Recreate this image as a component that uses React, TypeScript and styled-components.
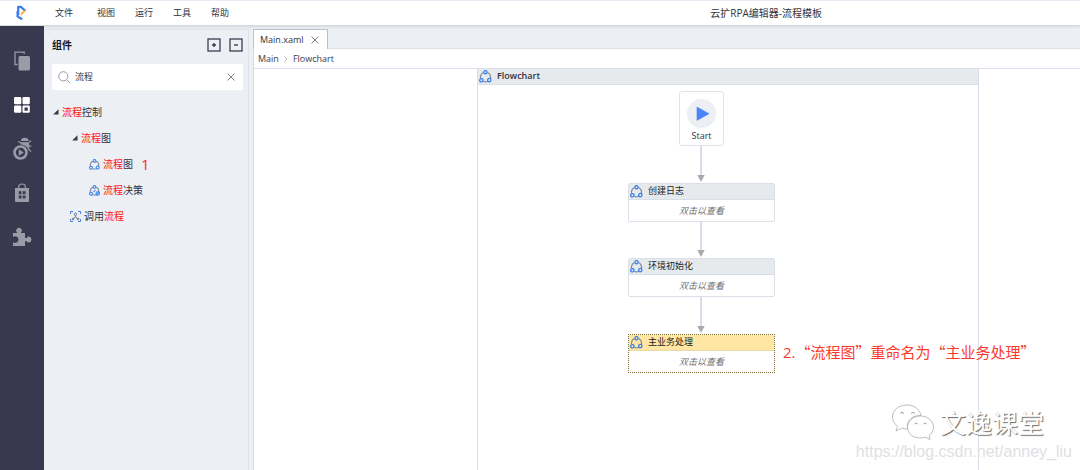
import React, { useState } from 'react';
import styled, { createGlobalStyle } from 'styled-components';

const GlobalStyle = createGlobalStyle`
  *, *::before, *::after { box-sizing: border-box; }
  body {
    margin: 0;
    background: #eceff4;
    color: #33333b;
    font-family: "Open Sans", "Noto Sans CJK SC", sans-serif;
    font-size: 9px;
    line-height: 14px;
  }
  button, input { font: inherit; color: inherit; }
  button { padding: 0; border: 0; background: none; cursor: pointer; }
  svg { display: block; flex: none; }
  ul { list-style: none; margin: 0; padding: 0; }
`;

const Shell = styled.div`
  display: flex;
  flex-direction: column;
  min-height: 100vh;
`;

const TopBar = styled.header`
  display: flex;
  align-items: center;
  height: 26px;
  padding-left: 14px;
  background: #fff;
  border-top: 1px solid #e6ebf6;
  border-bottom: 1px solid #d9dbe0;
  box-shadow: 0 1px 2px rgba(60, 64, 80, 0.12);
  z-index: 1;
`;

const Menu = styled.nav`
  display: grid;
  grid-template-columns: 42px repeat(4, 38px);
  margin-left: 27px;
`;

const MenuButton = styled.button`
  text-align: left;
`;

const DocTitle = styled.h1`
  margin: 0 258px 0 auto;
  font-size: 10px;
  font-weight: 400;
  white-space: nowrap;
`;

const Body = styled.div`
  display: flex;
  flex: 1;
`;

const Rail = styled.nav`
  display: flex;
  flex: none;
  flex-direction: column;
  align-items: center;
  gap: 20px;
  width: 44px;
  padding-top: 23px;
  background: #38394e;
`;

const RailButton = styled.button<{ $active?: boolean }>`
  display: grid;
  place-items: center;
  width: 24px;
  height: 24px;
  color: ${(p) => (p.$active ? '#ffffff' : '#9a9ba7')};
`;

const SidePanel = styled.aside`
  flex: none;
  width: 205px;
  margin-top: 3px;
  padding: 0 5px 0 8px;
  border-top: 1px solid #dfe2e8;
  border-right: 1px solid #dfe2e8;
`;

const PanelHead = styled.div`
  display: flex;
  align-items: center;
  height: 30px;
`;

const PanelTitle = styled.h2`
  flex: 1;
  margin: 0;
  font-size: 10px;
  font-weight: 700;
  color: #16161c;
`;

const SquareButton = styled.button`
  width: 14px;
  height: 14px;
  margin-left: 8px;
`;

const SearchBox = styled.label`
  display: flex;
  align-items: center;
  height: 26px;
  margin-top: 4px;
  padding: 0 8px 0 6px;
  background: #fff;
`;

const SearchInput = styled.input`
  flex: 1;
  min-width: 0;
  margin-left: 4px;
  padding: 0;
  border: 0;
  outline: none;
  background: transparent;
`;

const Tree = styled.ul`
  padding-top: 9px;
  font-size: 10px;
`;

const TreeRow = styled.li<{ $indent: number }>`
  display: flex;
  align-items: center;
  height: 26px;
  padding-left: ${(p) => p.$indent}px;
  white-space: nowrap;
`;

const TreeLabel = styled.span`
  margin-left: 3px;
`;

const Hit = styled.em`
  font-style: normal;
  color: #ff1414;
`;

const StepNumber = styled.span`
  margin-left: 8px;
  font-size: 15px;
  color: #ff2a1c;
`;

const Editor = styled.main`
  display: flex;
  flex: 1;
  flex-direction: column;
  min-width: 0;
  margin: 3px 0 0 4px;
`;

const TabStrip = styled.div`
  display: flex;
  height: 20px;
  border-bottom: 1px solid #dcdfe5;
`;

const Tab = styled.div`
  display: flex;
  align-items: center;
  justify-content: space-between;
  width: 75px;
  height: 20px;
  padding: 0 8px 0 6px;
  background: #fff;
  border: 1px solid #bfc0c4;
  border-bottom: 0;
`;

const Crumbs = styled.nav`
  display: flex;
  align-items: center;
  gap: 5px;
  height: 20px;
  padding-left: 4px;
  background: #fff;
  border-left: 1px solid #d5dae4;
  border-bottom: 1px solid #dbe1ec;
`;

const Crumb = styled.a`
  color: #3b3b49;
  text-decoration: none;
`;

const Canvas = styled.div`
  display: flex;
  position: relative;
  flex: 1;
  min-height: 380px;
  padding-left: 223px;
  background: #fff;
  border-left: 1px solid #d5dae4;
`;

const Frame = styled.section`
  display: flex;
  flex: none;
  flex-direction: column;
  width: 502px;
  border: 1px solid #d9e0ea;
  border-width: 0 1px;
`;

const CardHead = styled.header<{ $selected?: boolean }>`
  display: flex;
  align-items: center;
  gap: 5px;
  height: 16px;
  padding-left: 1px;
  background: ${(p) => (p.$selected ? '#ffe6a2' : '#e7eaed')};
  border-bottom: 1px solid ${(p) => (p.$selected ? '#e8d9a8' : '#d7dfe9')};
  color: #1c1c22;
`;

const CardTitle = styled.h3`
  margin: 0;
  padding-bottom: 1px;
  font-size: 9px;
  font-weight: 400;
  line-height: 14px;
`;

const FrameTitle = styled(CardTitle)`
  font-weight: 600;
  color: #33333f;
`;

const Surface = styled.div`
  position: relative;
  flex: 1;
`;

const Node = styled.article<{ $top: number; $selected?: boolean }>`
  position: absolute;
  left: 150px;
  top: ${(p) => p.$top}px;
  width: 147px;
  height: 39px;
  background: #fff;
  border: 1px ${(p) => (p.$selected ? 'dotted #7d6a35' : 'solid #dadfe9')};
  border-radius: ${(p) => (p.$selected ? 0 : 2)}px;
`;

const NodeHint = styled.p`
  margin: 0;
  font-style: italic;
  line-height: 21px;
  text-align: center;
  color: #6f6f74;
`;

const StartNode = styled.article`
  display: flex;
  position: absolute;
  left: 201px;
  top: 6px;
  flex-direction: column;
  align-items: center;
  gap: 1px;
  width: 45px;
  height: 55px;
  padding-top: 7px;
  background: #fff;
  border: 1px solid #e0e2ec;
  border-radius: 3px;
`;

const Links = styled.svg`
  position: absolute;
  left: 0;
  top: 0;
`;

const Note = styled.p`
  position: absolute;
  left: 529px;
  top: 272px;
  margin: 0;
  font-size: 15px;
  line-height: 22px;
  white-space: nowrap;
  color: #fb3a2c;
`;

const Cjk = styled.span`
  font-family: "Noto Sans CJK SC", sans-serif;
`;

const Signature = styled.div`
  position: absolute;
  right: 8px;
  bottom: 8px;
  display: flex;
  flex-direction: column;
  align-items: flex-end;
`;

const SignatureName = styled.div`
  display: flex;
  align-items: center;
  gap: 5px;
  margin-right: 28px;
  font-family: "Noto Sans CJK SC", sans-serif;
  font-size: 26px;
  line-height: 40px;
  color: #fff;
  text-shadow: 1px 1px 1px #6a6a6a;
`;

const SignatureUrl = styled.div`
  font-family: "Liberation Sans", sans-serif;
  font-size: 16px;
  line-height: 20px;
  color: #e0e0e2;
`;

const FlowIcon = ({ size = 13, decision = false }: { size?: number; decision?: boolean }) => (
  <svg width={size} height={size} viewBox="0 0 12 12" fill="none" strokeWidth="1.100">
    <path d="M4.200 2.300C2.200 3.200 1.200 5.200 1.300 7.600M7.800 2.300c2 .9 3 2.900 2.900 5.300M4 10.600q2 .7 4 0" stroke="#7d8797" />
    <circle cx="6" cy="2.100" r="1.500" stroke="#2f7be8" />
    <circle cx="2.200" cy="9.500" r="1.600" stroke="#2f7be8" />
    <circle cx="9.500" cy="9.300" r={decision ? 1.900 : 1.600} stroke="#2f7be8" />
    {decision && <path d="M8 10.800l3-3M5 7.500l2-2" stroke="#2f7be8" />}
  </svg>
);

const InvokeIcon = () => (
  <svg width="11" height="11" viewBox="0 0 11 11" fill="none">
    <path d="M.5 3V.5H3M8 .5h2.500V3M10.500 8v2.500H8M3 10.500H.5V8" stroke="#3f83e6" />
    <path d="M5.500 4.500v1.500M3.500 7.500L5.500 6l2 1.500" stroke="#6d7788" />
    <circle cx="5.500" cy="3.300" r="1.200" stroke="#6d7788" />
    <circle cx="3" cy="8" r=".9" stroke="#6d7788" />
    <circle cx="8" cy="8" r=".9" stroke="#6d7788" />
  </svg>
);

const Caret = () => (
  <svg width="6" height="6" viewBox="0 0 6 6">
    <path d="M5.500 .3v5.200H.2z" fill="#3a3a42" />
  </svg>
);

const CloseIcon = () => (
  <svg width="8" height="8" viewBox="0 0 8 8" stroke="#7d7f8a" fill="none">
    <path d="M.5 .5l7 7M7.500 .5l-7 7" />
  </svg>
);

const SignIcon = ({ plus }: { plus?: boolean }) => (
  <svg width="14" height="14" viewBox="0 0 14 14" stroke="#3b3d50" fill="none">
    <rect x="1" y="1" width="12" height="12" strokeWidth="1.300" />
    <path d={plus ? 'M5 7h4M7 5v4' : 'M5 7h4'} strokeWidth="1.400" />
  </svg>
);

const Logo = () => (
  <svg width="14" height="16" viewBox="0 0 14 16" fill="none">
    <path d="M4.200 10.200V1.900h2.600l4.600 4" stroke="#3f7df6" strokeWidth="2.300" strokeLinejoin="round" />
    <path d="M3.600 6v5.600l4.600 2.700" stroke="#3f7df6" strokeWidth="2.300" strokeLinejoin="round" />
    <path d="M12.300 5.500L6.800 10.900V7.700l3.200-2.500z" fill="#fbb22c" />
  </svg>
);

const railItems = [
  {
    label: '文件',
    icon: (
      <svg width="18" height="20" viewBox="0 0 18 20">
        <path d="M4.500 13.500H2V1.200h9.200V3" fill="none" stroke="currentColor" strokeWidth="1.300" />
        <rect x="5.500" y="5" width="11.500" height="14.500" rx="1.500" fill="currentColor" />
      </svg>
    ),
  },
  {
    label: '组件',
    icon: (
      <svg width="16" height="16" viewBox="0 0 16 16" fill="currentColor">
        <rect x="0" y="0" width="7.300" height="7.300" rx="1.300" />
        <rect x="8.500" y="0" width="7.300" height="7.300" rx="1.300" />
        <rect x="0" y="8.500" width="7.300" height="7.300" rx="1.300" />
        <path fillRule="evenodd" d="M9.500 8.500h5.300q1 0 1 1v5.300q0 1-1 1H9.500q-1 0-1-1V9.500q0-1 1-1zm1 2v3.300h3.300v-3.300z" />
      </svg>
    ),
  },
  {
    label: '调试',
    icon: (
      <svg width="20" height="24" viewBox="0 0 20 24" fill="none" stroke="currentColor">
        <circle cx="8.500" cy="15.500" r="6" strokeWidth="2.600" />
        <path d="M6.800 12.300l5 3.200-5 3.200z" fill="currentColor" stroke="none" />
        <path d="M9 4a3.800 3.200 0 0 1 7.600 0z" fill="currentColor" stroke="none" />
        <path d="M8.500 5.300h7.500q2.300 3 1 7.200Q14 8 8.500 7.200z" fill="currentColor" stroke="none" />
        <path d="M15.500 6.500L19 3.800M16.500 9h3M16 11.500l3 3.200M6 4.500l3.500 1.500" strokeWidth="1.200" />
      </svg>
    ),
  },
  {
    label: '市场',
    icon: (
      <svg width="16" height="20" viewBox="0 0 16 20">
        <path d="M4.700 5V3.500q0-2.500 3.300-2.500t3.300 2.500V5" fill="none" stroke="currentColor" strokeWidth="1.200" />
        <path
          fill="currentColor"
          fillRule="evenodd"
          d="M1 5h14v13q0 1-1 1H2q-1 0-1-1zm3.700 3.300v3h2.800v-3zm4 0v3h2.800v-3zm-4 4.200v3h2.800v-3zm4 0v3h2.800v-3z"
        />
      </svg>
    ),
  },
  {
    label: '插件',
    icon: (
      <svg width="20" height="20" viewBox="0 0 20 20" fill="currentColor">
        <path d="M1 6h4.300Q4 4.800 4.100 3.300 4.600.8 7 .8t2.900 2.500Q10 4.800 8.700 6H13v5h1.600q.7-1.400 2.300-1.400 2.600.4 2.600 3t-2.600 3q-1.600 0-2.300-1.400H13V19H1v-3.800q.8.800 2.300.8 3-.4 3.200-3.400-.2-3-3.200-3.400-1.500 0-2.300.8z" />
      </svg>
    ),
  },
];

const menuItems = ['文件', '视图', '运行', '工具', '帮助'];

const nodes = [
  { title: '创建日志', top: 98 },
  { title: '环境初始化', top: 173 },
  { title: '主业务处理', top: 249, selected: true },
];

const links = [
  { from: 61, to: 98 },
  { from: 137, to: 173 },
  { from: 212, to: 249 },
];

const WechatMark = () => (
  <svg width="44" height="38" viewBox="0 0 44 38" fill="#fff" stroke="#a2a2a2" strokeWidth=".7">
    <path d="M16 2C7.500 2 1.500 7.300 1.500 14c0 4 2 7 5 9.200L5 28l5.500-2.800q3 .9 6 .7C15 17 22 12 30 12.500 28.500 6 23 2 16 2z" />
    <path d="M29.500 13C22 13 16.500 18 16.500 24.300S22 35 29.500 35q2.500 0 5-.8L39 36.500 38 32.500c2.700-2 4.500-4.900 4.500-8.200C42.500 18 37 13 29.500 13z" />
    <path d="M9 10.500q2-2.500 4 0M20 10.500q2-2.500 4 0M23.500 21q1.500-2 3.200 0M32.500 21q1.500-2 3.200 0" fill="none" stroke="#777" />
  </svg>
);

export default function App() {
  const [query, setQuery] = useState('流程');

  return (
    <Shell>
      <GlobalStyle />
      <TopBar>
        <Logo />
        <Menu>
          {menuItems.map((item) => (
            <MenuButton key={item}>{item}</MenuButton>
          ))}
        </Menu>
        <DocTitle>云扩RPA编辑器-流程模板</DocTitle>
      </TopBar>
      <Body>
        <Rail>
          {railItems.map((item, i) => (
            <RailButton key={item.label} $active={i === 1} aria-label={item.label}>
              {item.icon}
            </RailButton>
          ))}
        </Rail>
        <SidePanel>
          <PanelHead>
            <PanelTitle>组件</PanelTitle>
            <SquareButton aria-label="全部展开"><SignIcon plus /></SquareButton>
            <SquareButton aria-label="全部折叠"><SignIcon /></SquareButton>
          </PanelHead>
          <SearchBox>
            <svg width="13" height="13" viewBox="0 0 13 13" fill="none" stroke="#9a9ca6">
              <circle cx="5.300" cy="5.300" r="4.600" />
              <path d="M8.700 8.700l3.600 3.600" />
            </svg>
            <SearchInput aria-label="搜索组件" value={query} onChange={(e) => setQuery(e.target.value)} />
            <button aria-label="清除" onClick={() => setQuery('')}><CloseIcon /></button>
          </SearchBox>
          <Tree>
            <TreeRow $indent={1}>
              <Caret />
              <TreeLabel><Hit>流程</Hit>控制</TreeLabel>
            </TreeRow>
            <TreeRow $indent={20}>
              <Caret />
              <TreeLabel><Hit>流程</Hit>图</TreeLabel>
            </TreeRow>
            <TreeRow $indent={37}>
              <FlowIcon size={11} />
              <TreeLabel><Hit>流程</Hit>图</TreeLabel>
              <StepNumber>1</StepNumber>
            </TreeRow>
            <TreeRow $indent={37}>
              <FlowIcon size={11} decision />
              <TreeLabel><Hit>流程</Hit>决策</TreeLabel>
            </TreeRow>
            <TreeRow $indent={18}>
              <InvokeIcon />
              <TreeLabel>调用<Hit>流程</Hit></TreeLabel>
            </TreeRow>
          </Tree>
        </SidePanel>
        <Editor>
          <TabStrip>
            <Tab>
              <span>Main.xaml</span>
              <button aria-label="关闭"><CloseIcon /></button>
            </Tab>
          </TabStrip>
          <Crumbs>
            <Crumb href="#main">Main</Crumb>
            <svg width="4" height="6" viewBox="0 0 4 6" fill="none" stroke="#b4b8c6">
              <path d="M.5 .5L3 3 .5 5.500" />
            </svg>
            <Crumb href="#flowchart">Flowchart</Crumb>
          </Crumbs>
          <Canvas>
            <Frame>
              <CardHead>
                <FlowIcon />
                <FrameTitle>Flowchart</FrameTitle>
              </CardHead>
              <Surface>
                <Links width="500" height="290">
                  {links.map(({ from, to }) => (
                    <g key={from}>
                      <path d={`M223 ${from}V${to - 7}`} stroke="#cbd1df" strokeWidth="1.500" />
                      <path d={`M219.300 ${to - 8}h7.400L223 ${to - 1}z`} fill="#a9aaae" />
                    </g>
                  ))}
                </Links>
                <StartNode>
                  <svg width="29" height="29" viewBox="0 0 29 29">
                    <circle cx="14.500" cy="14.500" r="14.500" fill="#eceff4" />
                    <path d="M10 8l12 6.700L10 21.400z" fill="#4b84f8" stroke="#4b84f8" strokeLinejoin="round" strokeWidth=".6" />
                  </svg>
                  <span>Start</span>
                </StartNode>
                {nodes.map((node) => (
                  <Node key={node.title} $top={node.top} $selected={node.selected}>
                    <CardHead $selected={node.selected}>
                      <FlowIcon />
                      <CardTitle>{node.title}</CardTitle>
                    </CardHead>
                    <NodeHint>双击以查看</NodeHint>
                  </Node>
                ))}
              </Surface>
            </Frame>
            <Note>2.<Cjk>“流程图”重命名为“主业务处理”</Cjk></Note>
            <Signature>
              <SignatureName>
                <WechatMark />
                文逸课堂
              </SignatureName>
              <SignatureUrl>https://blog.csdn.net/anney_liu</SignatureUrl>
            </Signature>
          </Canvas>
        </Editor>
      </Body>
    </Shell>
  );
}
